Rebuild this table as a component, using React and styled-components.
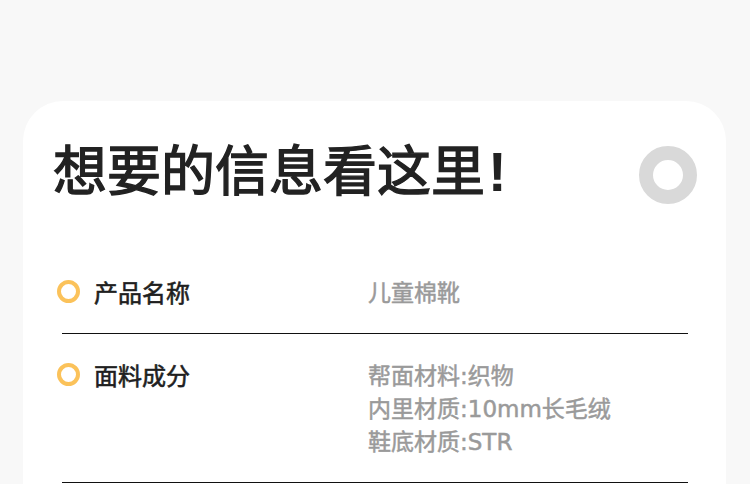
import React from 'react';
import styled, { createGlobalStyle } from 'styled-components';

const GlobalStyle = createGlobalStyle`
  html, body {
    margin: 0;
    padding: 0;
    background: #f8f8f8;
  }
  body {
    font-family: "Liberation Sans", "Noto Sans CJK SC", sans-serif;
  }
`;

const specs = [
  { label: '产品名称', values: ['儿童棉靴'] },
  {
    label: '面料成分',
    values: ['帮面材料:织物', '内里材质:10mm长毛绒', '鞋底材质:STR']
  }
];

const App = () => (
  <>
    <GlobalStyle />
    <Page>
      <Card>
        <Header>
          <Title>
            想要的信息看这里<Bang>!</Bang>
          </Title>
          <Donut />
        </Header>
        <List>
          {specs.map(spec => (
            <Row key={spec.label}>
              <Label>
                <Dot />
                {spec.label}
              </Label>
              <Values>
                {spec.values.map(v => (
                  <Value key={v}>{v}</Value>
                ))}
              </Values>
            </Row>
          ))}
        </List>
      </Card>
    </Page>
  </>
);

export default App;

const Page = styled.div`
  height: 484px;
  overflow: hidden;
  padding: 101px 24px 0 23px;
  box-sizing: border-box;
`;

const Card = styled.div`
  background: #fff;
  border-radius: 40px 40px 0 0;
  padding: 27px 29px 0 30px;
  min-height: 420px;
`;

const Header = styled.div`
  display: flex;
  align-items: center;
  justify-content: space-between;
  height: 84px;
`;

const Title = styled.h1`
  margin: 0;
  font-family: "Noto Sans CJK SC", sans-serif;
  font-size: 54px;
  line-height: 1;
  font-weight: 400;
  -webkit-text-stroke: 1.4px #222;
  color: #222;
`;

const Bang = styled.span`
  font-family: "Liberation Sans", sans-serif;
  font-size: 56px;
  font-weight: 700;
  -webkit-text-stroke: 0;
  margin-left: 3px;
`;

const Donut = styled.div`
  width: 58px;
  height: 58px;
  box-sizing: border-box;
  border-radius: 50%;
  border: 14px solid #d9d9d9;
  margin-top: 10px;
`;

const List = styled.div`
  margin-top: 49px;
  padding: 0 9px;
`;

const Row = styled.div`
  display: flex;
  align-items: flex-start;
  border-bottom: 1px solid #111;
  padding: 14px 0 23px;
  margin-bottom: 10px;
`;

const Label = styled.div`
  width: 311px;
  flex: none;
  display: flex;
  align-items: center;
  gap: 14px;
  margin-left: -5px;
  font-family: "Noto Sans CJK SC", sans-serif;
  font-size: 24px;
  font-weight: 400;
  -webkit-text-stroke: 0.6px #1f1f1f;
  color: #1f1f1f;
  line-height: 33px;
`;

const Dot = styled.span`
  width: 23px;
  height: 23px;
  box-sizing: border-box;
  border-radius: 50%;
  border: 4px solid #fbc25a;
  flex: none;
`;

const Values = styled.div`
  display: flex;
  flex-direction: column;
  margin-top: 2px;
`;

const Value = styled.div`
  font-family: "DejaVu Sans", "Noto Sans CJK SC", sans-serif;
  font-size: 23px;
  font-weight: 400;
  -webkit-text-stroke: 0.5px #9a9a9a;
  color: #9a9a9a;
  line-height: 33px;
`;
